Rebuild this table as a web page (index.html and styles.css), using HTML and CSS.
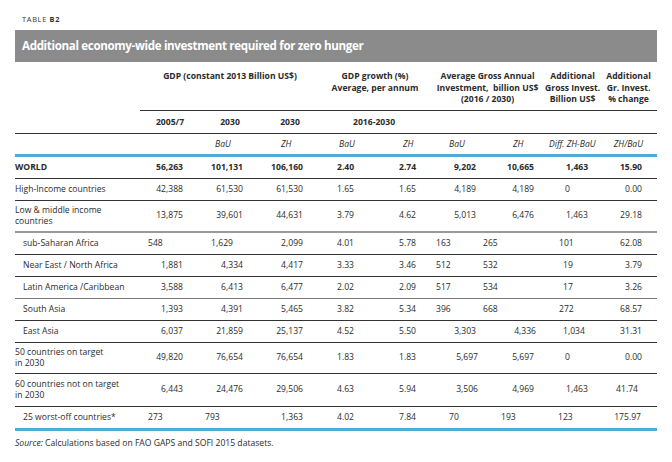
FILE: index.html
```html
<!DOCTYPE html>
<html>
<head>
<meta charset="utf-8">
<link rel="stylesheet" href="styles.css">
</head>
<body>
<div class="page">
  <div class="tag">TABLE <b>B2</b></div>
  <div class="banner">Additional economy-wide investment required for zero hunger</div>
  <table class="tbl">
    <colgroup>
      <col class="w-label"><col class="w60"><col class="w60"><col class="w60"><col class="w60"><col class="w50"><col class="w50"><col class="w65"><col class="w55"><col class="w57">
    </colgroup>
    <thead>
      <tr class="grp">
        <th class="nob"></th>
        <th colspan="3">GDP (constant 2013 Billion US$)</th>
        <th colspan="2">GDP growth (%)<br>Average, per annum</th>
        <th colspan="2">Average Gross Annual<br>Investment,&nbsp; billion US$<br>(2016 / 2030)</th>
        <th>Additional<br>Gross Invest.<br>Billion US$</th>
        <th>Additional<br>Gr. Invest.<br>% change</th>
      </tr>
      <tr class="yrs">
        <th></th>
        <th>2005/7</th>
        <th>2030</th>
        <th>2030</th>
        <th colspan="2" class="span-yr">2016-2030</th>
        <th></th><th></th><th></th><th></th>
      </tr>
      <tr class="scen">
        <th></th>
        <th></th>
        <th class="s2">BaU</th>
        <th class="s3">ZH</th>
        <th class="s4">BaU</th>
        <th class="s5">ZH</th>
        <th class="s6">BaU</th>
        <th class="s7">ZH</th>
        <th class="s8">Diff. ZH-BaU</th>
        <th class="s9">ZH/BaU</th>
      </tr>
    </thead>
    <tbody>
      <tr class="world">
        <td>WORLD</td>
        <td class="c1">56,263</td><td class="c2">101,131</td><td class="c3">106,160</td>
        <td class="c4">2.40</td><td class="c5">2.74</td>
        <td class="c6">9,202</td><td class="c7">10,665</td>
        <td class="c8 p21">1,463</td><td class="c9">15.90</td>
      </tr>
      <tr>
        <td>High-Income countries</td>
        <td class="c1">42,388</td><td class="c2">61,530</td><td class="c3">61,530</td>
        <td class="c4">1.65</td><td class="c5">1.65</td>
        <td class="c6">4,189</td><td class="c7">4,189</td>
        <td class="c8">0</td><td class="c9">0.00</td>
      </tr>
      <tr class="two grayline">
        <td>Low &amp; middle income<br>countries</td>
        <td class="c1">13,875</td><td class="c2">39,601</td><td class="c3">44,631</td>
        <td class="c4">3.79</td><td class="c5">4.62</td>
        <td class="c6">5,013</td><td class="c7">6,476</td>
        <td class="c8 p21">1,463</td><td class="c9">29.18</td>
      </tr>
      <tr>
        <td class="ind">sub-Saharan Africa</td>
        <td class="c1 l8">548</td><td class="c2 r27">1,629</td><td class="c3">2,099</td>
        <td class="c4">4.01</td><td class="c5">5.78</td>
        <td class="c6 l6">163</td><td class="c7 l3">265</td>
        <td class="c8 p14">101</td><td class="c9">62.08</td>
      </tr>
      <tr>
        <td class="ind">Near East / North Africa</td>
        <td class="c1">1,881</td><td class="c2">4,334</td><td class="c3">4,417</td>
        <td class="c4">3.33</td><td class="c5">3.46</td>
        <td class="c6 l6">512</td><td class="c7 l3">532</td>
        <td class="c8 p18">19</td><td class="c9">3.79</td>
      </tr>
      <tr class="softline">
        <td class="ind">Latin America /Caribbean</td>
        <td class="c1">3,588</td><td class="c2">6,413</td><td class="c3">6,477</td>
        <td class="c4">2.02</td><td class="c5">2.09</td>
        <td class="c6 l6">517</td><td class="c7 l3">534</td>
        <td class="c8 p18">17</td><td class="c9">3.26</td>
      </tr>
      <tr>
        <td class="ind">South Asia</td>
        <td class="c1">1,393</td><td class="c2">4,391</td><td class="c3">5,465</td>
        <td class="c4">3.82</td><td class="c5">5.34</td>
        <td class="c6 l6">396</td><td class="c7 l3">668</td>
        <td class="c8 p14">272</td><td class="c9">68.57</td>
      </tr>
      <tr>
        <td class="ind">East Asia</td>
        <td class="c1">6,037</td><td class="c2">21,859</td><td class="c3">25,137</td>
        <td class="c4">4.52</td><td class="c5">5.50</td>
        <td class="c6">3,303</td><td class="c7 r9">4,336</td>
        <td class="c8 p18">1,034</td><td class="c9">31.31</td>
      </tr>
      <tr class="two">
        <td>50 countries on target<br>in 2030</td>
        <td class="c1">49,820</td><td class="c2">76,654</td><td class="c3">76,654</td>
        <td class="c4">1.83</td><td class="c5">1.83</td>
        <td class="c6 r2">5,697</td><td class="c7">5,697</td>
        <td class="c8">0</td><td class="c9">0.00</td>
      </tr>
      <tr class="two tall">
        <td>60 countries not on target<br>in 2030</td>
        <td class="c1">6,443</td><td class="c2">24,476</td><td class="c3">29,506</td>
        <td class="c4">4.63</td><td class="c5">5.94</td>
        <td class="c6 r2">3,506</td><td class="c7">4,969</td>
        <td class="c8 p21">1,463</td><td class="c9 r19">41.74</td>
      </tr>
      <tr class="last">
        <td class="ind">25 worst-off countries*</td>
        <td class="c1 l8">273</td><td class="c2 l5">793</td><td class="c3">1,363</td>
        <td class="c4">4.02</td><td class="c5">7.84</td>
        <td class="c6 l19">70</td><td class="c7 l21">193</td>
        <td class="c8 p13">123</td><td class="c9 r16">175.97</td>
      </tr>
    </tbody>
  </table>
  <div class="source"><i>Source:</i> Calculations based on FAO GAPS and SOFI 2015 datasets.</div>
</div>
</body>
</html>
```

FILE: styles.css
```css
html, body {
  margin: 0;
  padding: 0;
  background: #ffffff;
}
body {
  font-family: "Open Sans", "Noto Sans", sans-serif;
  color: #2b2b2b;
}
.page {
  width: 672px;
  height: 462px;
  padding-top: 15px;
  box-sizing: border-box;
}
.tag {
  margin-left: 22px;
  font-size: 7.4px;
  line-height: 9px;
  letter-spacing: 0.7px;
  color: #333;
}
.tag b { font-weight: 700; }
.banner {
  margin: 6px 0 0 15px;
  width: 642px;
  height: 32px;
  box-sizing: border-box;
  background: #8b8b8b;
  color: #fff;
  font-weight: 700;
  font-size: 11.6px;
  letter-spacing: -0.35px;
  line-height: 32px;
  padding-left: 7px;
}
.tbl {
  margin-left: 15px;
  width: 642px;
  table-layout: fixed;
  border-collapse: collapse;
  font-size: 8.6px;
}
.w-label { width: 125px; }
.w60 { width: 60px; }
.w50 { width: 50px; }
.w65 { width: 65px; }
.w55 { width: 55px; }
.w57 { width: 57px; }
.tbl th, .tbl td {
  padding: 0;
  white-space: nowrap;
}
.tbl .grp th {
  height: 48px;
  vertical-align: top;
  padding-top: 9px;
  box-sizing: border-box;
  font-weight: 700;
  line-height: 11.5px;
  text-align: center;
  border-bottom: 1px solid #333;
}
.tbl .grp th.nob { border-bottom: none; }
.tbl .yrs th {
  height: 22px;
  font-weight: 700;
  text-align: center;
  vertical-align: middle;
  border-bottom: 1px solid #333;
}
.tbl .yrs th.span-yr { text-align: left; padding-left: 33px; }
.tbl .scen th {
  height: 20px;
  font-weight: 400;
  font-style: italic;
  vertical-align: middle;
  border-bottom: 3px solid #4aaed6;
  text-align: left;
}
.tbl .scen .s2 { padding-left: 15px; }
.tbl .scen .s3 { padding-left: 21px; }
.tbl .scen .s4 { padding-left: 19px; }
.tbl .scen .s5 { padding-left: 23px; }
.tbl .scen .s6 { padding-left: 19px; }
.tbl .scen .s7 { padding-left: 33px; }
.tbl .scen .s8 { padding-left: 4px; }
.tbl .scen .s9 { text-align: right; padding-right: 14px; }

.tbl tbody td {
  height: 21px;
  vertical-align: middle;
  border-bottom: 1px solid #333;
  line-height: 10.5px;
}
.tbl tbody tr.two td { height: 30px; }
.tbl tbody tr.tall td { height: 32px; }
.tbl tbody tr.grayline td { border-bottom: 2px solid #9a9a9a; }
.tbl tbody tr.softline td { border-bottom: 1px solid #777; }
.tbl tbody tr.last td { border-bottom: 3px solid #4aaed6; }
.tbl tbody tr.world td { font-weight: 700; }
.tbl tbody td.ind { padding-left: 8px; }

.tbl td.c1, .tbl td.c2, .tbl td.c3 { text-align: right; padding-right: 17px; }
.tbl td.c4 { text-align: left; padding-left: 17px; }
.tbl td.c5 { text-align: left; padding-left: 19px; }
.tbl td.c6 { text-align: right; padding-right: 4px; }
.tbl td.c7 { text-align: right; padding-right: 11px; }
.tbl td.c8 { text-align: left; padding-left: 20px; }
.tbl td.c9 { text-align: right; padding-right: 15px; }

.tbl td.l8 { text-align: left; padding-left: 8px; padding-right: 0; }
.tbl td.l5 { text-align: left; padding-left: 5px; padding-right: 0; }
.tbl td.l6 { text-align: left; padding-left: 6px; padding-right: 0; }
.tbl td.l3 { text-align: left; padding-left: 3px; padding-right: 0; }
.tbl td.l19 { text-align: left; padding-left: 19px; padding-right: 0; }
.tbl td.l21 { text-align: left; padding-left: 21px; padding-right: 0; }
.tbl td.r27 { padding-right: 27px; }
.tbl td.r9 { padding-right: 9px; }
.tbl td.r2 { padding-right: 2px; }
.tbl td.r19 { padding-right: 19px; }
.tbl td.r16 { padding-right: 16px; }
.tbl td.p21 { padding-left: 21px; }
.tbl td.p14 { padding-left: 14px; }
.tbl td.p18 { padding-left: 18px; }
.tbl td.p13 { padding-left: 13px; }

.source {
  margin: 6px 0 0 15px;
  font-size: 8.6px;
  line-height: 12px;
}
```
